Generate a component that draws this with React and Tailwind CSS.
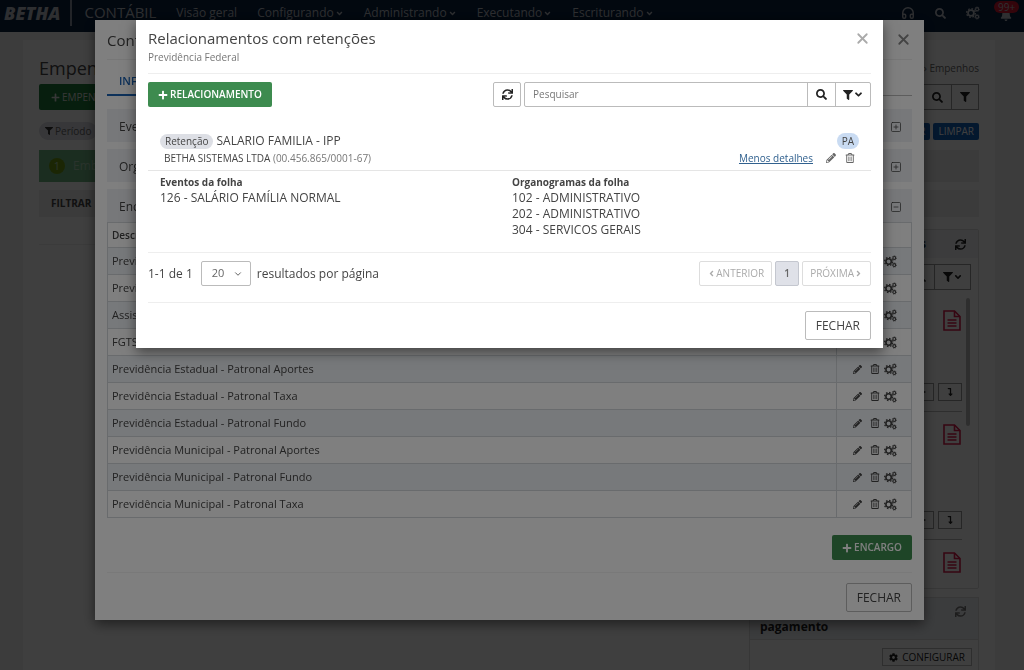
import { useState } from "react"
import {
  FaAngleDown,
  FaAngleLeft,
  FaAngleRight,
  FaBell,
  FaCog,
  FaFilter,
  FaLevelDownAlt,
  FaPencilAlt,
  FaPlus,
  FaRegTrashAlt,
  FaSearch,
  FaSync,
} from "react-icons/fa"
import { ChevronDown, Headphones, SquareMinus, SquarePlus, X } from "lucide-react"

const menu = ["Configurando", "Administrando", "Executando", "Escriturando"]

const encargos = [
  "Previdência",
  "Previdência",
  "Assistência",
  "FGTS",
  "Previdência Estadual - Patronal Aportes",
  "Previdência Estadual - Patronal Taxa",
  "Previdência Estadual - Patronal Fundo",
  "Previdência Municipal - Patronal Aportes",
  "Previdência Municipal - Patronal Fundo",
  "Previdência Municipal - Patronal Taxa",
]

const organogramas = ["102 - ADMINISTRATIVO", "202 - ADMINISTRATIVO", "304 - SERVICOS GERAIS"]

function Engrenagens({ className }) {
  return (
    <svg viewBox="0 0 24 24" fill="none" stroke="currentColor" className={className}>
      <circle cx="8.5" cy="12" r="5" strokeWidth="3" />
      <circle cx="8.5" cy="12" r="7.4" strokeWidth="2.4" strokeDasharray="2.9 2.9" />
      <circle cx="19" cy="5.5" r="2.6" strokeWidth="2" />
      <circle cx="19" cy="5.5" r="4" strokeWidth="1.4" strokeDasharray="1.6 1.6" />
      <circle cx="19" cy="18.5" r="2.6" strokeWidth="2" />
      <circle cx="19" cy="18.5" r="4" strokeWidth="1.4" strokeDasharray="1.6 1.6" />
    </svg>
  )
}

function IconeDocumento() {
  return (
    <svg viewBox="0 0 18 21" fill="none" stroke="currentColor" strokeWidth="1.6" className="mr-px h-[21px] w-[18px] text-[#d81b4a]">
      <path d="M1 1H11.5L17 6.5V20H1Z" />
      <path d="M11.5 1V6.5H17" />
      <path d="M4.5 10H13.5M4.5 13H13.5M4.5 16H13.5" strokeWidth="1.3" />
    </svg>
  )
}

function Header() {
  return (
    <header className="flex h-8 shrink-0 items-start bg-[#08203f] pr-2 pl-1 text-[#b8bcc4]">
      <span className="text-lg leading-[26px] font-extrabold italic">BETHA</span>
      <span className="mr-3 ml-2.5 h-[26px] w-0.5 bg-[#8a93a0]" />
      <span className="text-[15px] leading-[25px]">CONTÁBIL</span>
      <nav className="ml-5 flex flex-1 gap-5 text-xs leading-[26px]">
        <a href="#geral">Visão geral</a>
        {menu.map((m) => (
          <a key={m} href={"#" + m} className="flex items-center gap-px">
            {m} <FaAngleDown size={9} />
          </a>
        ))}
      </nav>
      <div className="flex h-[26px] items-center gap-5">
        <button aria-label="Suporte"><Headphones size={14} strokeWidth={2.5} /></button>
        <button aria-label="Buscar"><FaSearch size={11} /></button>
        <button aria-label="Configurações"><Engrenagens className="h-3.5 w-3.5" /></button>
        <button aria-label="Notificações" className="relative pt-1 pr-1">
          <FaBell size={12} />
          <span className="absolute -top-1 -left-1.5 rounded-full bg-[#d0142c] px-1 text-[10px] leading-3">99+</span>
        </button>
      </div>
    </header>
  )
}

function Documento() {
  return (
    <li className="flex h-32 shrink-0 flex-col items-end justify-between border-b border-[#bbb] pt-3 pb-2.5 first:h-[114px]">
      <IconeDocumento />
      <div className="flex gap-1">
        <button aria-label="Adicionar" className="flex h-[18px] w-6 items-center justify-center border border-[#999]">
          <FaPlus size={8} />
        </button>
        <button aria-label="Descer" className="flex h-[18px] w-6 items-center justify-center border border-[#999]">
          <FaLevelDownAlt size={8} />
        </button>
      </div>
    </li>
  )
}

function Pagina() {
  return (
    <div className="flex h-screen flex-col overflow-hidden bg-[#f0f0f0]">
      <Header />
      <main className="mt-2 mr-[29px] ml-[23px] flex-1 bg-white px-4 pt-4">
        <div className="flex h-6 items-center justify-between">
          <h1 className="text-lg">Empenhos</h1>
          <span className="text-[10px] text-[#666]">› Empenhos</span>
        </div>
        <div className="mt-1 flex justify-between">
          <button className="flex h-[26px] items-center gap-0.5 rounded-xs bg-[#1d7a38] px-3 text-[10px] text-[#ddd]">
            <FaPlus size={9} /> EMPENHO
          </button>
          <div className="flex h-[26px] border border-[#999] text-[#222]">
            <input aria-label="Pesquisar empenhos" className="w-52" />
            <button aria-label="Pesquisar" className="flex w-7 items-center justify-center border-l border-[#999]"><FaSearch size={11} /></button>
            <button aria-label="Filtrar" className="flex w-[27px] items-center justify-center border-l border-[#999]"><FaFilter size={10} /></button>
          </div>
        </div>
        <div className="mt-3 flex h-[18px] items-center justify-between text-[10px]">
          <span className="flex items-center gap-0.5 rounded-full bg-[#dcdce4] px-1.5 leading-[18px] text-[#666]">
            <FaFilter size={8} className="text-[#333]" /> Período
          </span>
          <div className="flex gap-[3px] text-white">
            <button className="rounded-xs bg-[#1360b8] px-[5px] leading-[17px]">FILTRAR</button>
            <button className="rounded-xs bg-[#1360b8] px-[5px] leading-[17px]">LIMPAR</button>
          </div>
        </div>
        <div className="mt-2.5 flex h-8 bg-[#ececec]">
          <div className="flex w-1/4 items-center gap-2 bg-[#6fb583] px-2.5 text-xs text-[#a8cfb1]">
            <span className="h-4 w-4 rounded-full bg-[#6f9a10] text-center text-[11px] leading-4">1</span>
            Emb
          </div>
        </div>
        <div className="mt-2 flex h-[27px] items-center bg-[#ececec] px-3 text-[10px] font-bold">FILTRAR</div>
        <div className="mt-3 flex items-start justify-between">
          <div className="h-4 flex-1 border-b border-[#eee]" />
          <aside className="w-[230px] text-[#222]">
            <section className="rounded-xs border border-[#ddd]">
              <div className="flex h-7 items-center justify-between bg-[#f0f1f5] px-3 text-xs font-bold">
                <span className="flex-1 pr-[29px] text-right">Documentos</span>
                <FaSync size={11} />
              </div>
              <div className="mt-1.5 flex justify-end pr-[7px]">
                <button aria-label="Pesquisar documentos" className="flex h-[26px] w-7 items-center justify-center border border-r-0 border-[#999]">
                  <FaSearch size={10} />
                </button>
                <button aria-label="Filtrar documentos" className="flex h-[26px] w-[37px] items-center justify-center border border-[#999]">
                  <FaFilter size={10} /><FaAngleDown size={10} />
                </button>
              </div>
              <div className="mt-2 flex h-[290px] gap-1 overflow-hidden pr-2">
                <ul className="flex flex-1 flex-col">
                  <Documento />
                  <Documento />
                  <Documento />
                </ul>
                <div className="h-32 w-1 rounded-full bg-[#bbb]" />
              </div>
            </section>
            <section className="mt-2 border border-[#ddd]">
              <div className="flex h-[42px] items-start justify-between border-b border-[#ddd] bg-[#eef0f5] pt-0.5 pr-3 pl-2.5">
                <h2 className="w-28 text-xs leading-[18px] font-bold">Ordens de pagamento</h2>
                <FaSync size={11} className="mt-1.5 shrink-0 text-[#777]" />
              </div>
              <div className="flex justify-end px-1.5 py-2">
                <button className="flex h-[18px] items-center gap-1 border border-[#bbb] px-1.5 text-[10px]">
                  <FaCog size={9} /> CONFIGURAR
                </button>
              </div>
            </section>
          </aside>
        </div>
      </main>
    </div>
  )
}

function Secao({ titulo, aberta }) {
  return (
    <button className="mb-[7px] flex h-[33px] w-full items-center justify-between bg-[#eff1f5] pt-0.5 pr-2.5 pl-3 text-xs last-of-type:mb-0">
      {titulo}
      {aberta ? <SquareMinus size={12} strokeWidth={1.5} /> : <SquarePlus size={12} strokeWidth={1.5} />}
    </button>
  )
}

function ModalEncargos() {
  return (
    <div className="fixed inset-0 overflow-hidden bg-black/50 pt-5 pr-[5px]">
      <div className="mx-auto w-full max-w-[829px] bg-white px-3 pb-2 shadow-[0_4px_12px_rgba(0,0,0,0.5)]">
        <div className="flex h-10 items-center justify-between border-b border-[#eee]">
          <h2 className="text-[15px] leading-[22px]">Conf</h2>
          <button aria-label="Fechar" className="text-[#888]"><X size={17} strokeWidth={2.5} /></button>
        </div>
        <div className="mt-2 mb-[13px] flex h-7 border-b border-[#bbb] text-[11px] font-semibold text-[#1b62b5]">
          <button className="h-7 border-b-2 border-[#1b62b5] px-3">INFORMAÇÕES</button>
        </div>
        <Secao titulo="Eventos" />
        <Secao titulo="Organogramas" />
        <Secao titulo="Encargos" aberta />
        <table className="w-full border-collapse border border-[#d3d6db] text-left text-[11px]">
          <thead>
            <tr className="h-[25px] border-b border-[#d3d6db]">
              <th className="px-1 text-[10px] font-semibold">Descrição</th>
              <th className="w-[75px]" aria-label="Ações" />
            </tr>
          </thead>
          <tbody>
            {encargos.map((e, i) => (
              <tr key={i} className="h-[27px] border-b border-[#d3d6db] odd:bg-[#eff2f6]">
                <td className="px-1">{e}</td>
                <td className="border-l border-[#d3d6db] pl-4">
                  <div className="flex items-center gap-2">
                    <button aria-label="Editar"><FaPencilAlt size={9} /></button>
                    <button aria-label="Excluir"><FaRegTrashAlt size={10} /></button>
                    <button aria-label="Configurar" className="-ml-1"><Engrenagens className="h-[13px] w-[13px]" /></button>
                  </div>
                </td>
              </tr>
            ))}
          </tbody>
        </table>
        <div className="flex justify-end border-b border-[#f3f3f3] pt-[17px] pb-3">
          <button className="flex h-[25px] items-center gap-0.5 rounded-xs bg-[#3d8b4f] px-2.5 text-[10px] font-semibold text-white">
            <FaPlus size={10} /> ENCARGO
          </button>
        </div>
        <div className="flex justify-end pt-2.5">
          <button className="h-[29px] rounded-xs border border-[#bbb] px-2.5 text-xs">FECHAR</button>
        </div>
      </div>
    </div>
  )
}

function ModalRetencoes() {
  const [busca, setBusca] = useState("")
  const [porPagina, setPorPagina] = useState("20")

  return (
    <div className="fixed inset-0 overflow-hidden bg-black/50 pt-5 pr-[5px]">
      <div role="dialog" aria-labelledby="titulo" className="mx-auto w-full max-w-[747px] bg-white px-3 pb-2 shadow-[0_4px_12px_rgba(0,0,0,0.5)]">
        <div className="flex justify-between border-b border-[#eee] pt-2 pb-2">
          <div>
            <h2 id="titulo" className="text-[15px] leading-[21px]">Relacionamentos com retenções</h2>
            <p className="text-[10px] leading-4 text-[#777]">Previdência Federal</p>
          </div>
          <button aria-label="Fechar" className="mt-0.5 self-start text-[#aaa]"><X size={17} strokeWidth={2.5} /></button>
        </div>

        <div className="mt-2 flex items-center justify-between">
          <button className="flex h-[25px] items-center gap-0.5 rounded-xs bg-[#3d8b4f] px-2.5 text-[10px] font-semibold text-white">
            <FaPlus size={10} /> RELACIONAMENTO
          </button>
          <div className="flex gap-[3px] text-[#222]">
            <button aria-label="Atualizar" className="flex h-[25px] w-7 items-center justify-center rounded-xs border border-[#bbb]">
              <FaSync size={11} />
            </button>
            <div className="flex h-[25px] rounded-xs border border-[#bbb]">
              <input
                value={busca}
                onChange={(e) => setBusca(e.target.value)}
                placeholder="Pesquisar"
                aria-label="Pesquisar"
                className="w-[282px] px-2 text-[10px] placeholder:text-[#777]"
              />
              <button aria-label="Buscar" className="flex w-7 items-center justify-center border-l border-[#bbb]"><FaSearch size={11} /></button>
              <button aria-label="Filtrar" className="flex w-[35px] items-center justify-center border-l border-[#bbb]">
                <FaFilter size={10} /><FaAngleDown size={11} />
              </button>
            </div>
          </div>
        </div>

        <div className="mt-[26px] flex justify-between border-b border-[#e5e5e5] px-3 pb-1">
          <div>
            <div className="flex h-4 items-center gap-[3px] text-xs">
              <span className="rounded-full bg-[#dddfe5] px-[5px] text-[10px] leading-[15px] font-medium">Retenção</span>
              SALARIO FAMILIA - IPP
            </div>
            <p className="mt-px pl-1 text-[10px] leading-4 text-[#777]">
              <span className="text-[#444]">BETHA SISTEMAS LTDA</span> (00.456.865/0001-67)
            </p>
          </div>
          <div className="flex flex-col items-end">
            <span className="rounded-full bg-[#c9dbf2] px-[5px] text-[10px] leading-4">PA</span>
            <div className="mt-px flex h-4 items-center gap-[9px] pr-1 text-[#666]">
              <a href="#detalhes" className="mr-1 text-[10px] text-[#31618f] underline">Menos detalhes</a>
              <button aria-label="Editar"><FaPencilAlt size={10} /></button>
              <button aria-label="Excluir"><FaRegTrashAlt size={10} /></button>
            </div>
          </div>
        </div>

        <div className="grid h-[82px] grid-cols-[352px_1fr] border-b border-[#eee] px-3 pt-1 text-xs leading-4">
          <div>
            <h3 className="text-[10px] leading-[15px] font-bold">Eventos da folha</h3>
            <p>126 - SALÁRIO FAMÍLIA NORMAL</p>
          </div>
          <div>
            <h3 className="text-[10px] leading-[15px] font-bold">Organogramas da folha</h3>
            {organogramas.map((o) => <p key={o}>{o}</p>)}
          </div>
        </div>

        <div className="flex items-center justify-between border-b border-[#eee] pt-2 pb-4">
          <div className="flex items-center text-xs">
            1-1 de 1
            <span className="relative mr-1.5 ml-2">
              <select
                value={porPagina}
                onChange={(e) => setPorPagina(e.target.value)}
                aria-label="Resultados por página"
                className="h-[25px] w-[50px] appearance-none rounded-xs border border-[#bbb] pl-2.5 text-[11px] text-[#666]"
              >
                <option>20</option>
                <option>50</option>
              </select>
              <ChevronDown size={10} className="pointer-events-none absolute top-2 right-2" />
            </span>
            resultados por página
          </div>
          <div className="flex gap-[3px] text-[10px] text-[#aaa]">
            <button className="flex h-[25px] items-center rounded-xs border border-[#ddd] px-[7px]"><FaAngleLeft size={9} />ANTERIOR</button>
            <button className="h-[25px] w-6 rounded-xs border border-[#c4c7cf] bg-[#dfe1e8] font-semibold text-[#666]">1</button>
            <button className="flex h-[25px] items-center rounded-xs border border-[#ddd] px-[7px]">PRÓXIMA<FaAngleRight size={9} /></button>
          </div>
        </div>

        <div className="flex justify-end pt-2">
          <button className="h-[29px] rounded-xs border border-[#bbb] px-2.5 text-xs">FECHAR</button>
        </div>
      </div>
    </div>
  )
}

export default function App() {
  return (
    <div className="font-['Open_Sans',sans-serif] text-[#444]">
      <Pagina />
      <ModalEncargos />
      <ModalRetencoes />
    </div>
  )
}
